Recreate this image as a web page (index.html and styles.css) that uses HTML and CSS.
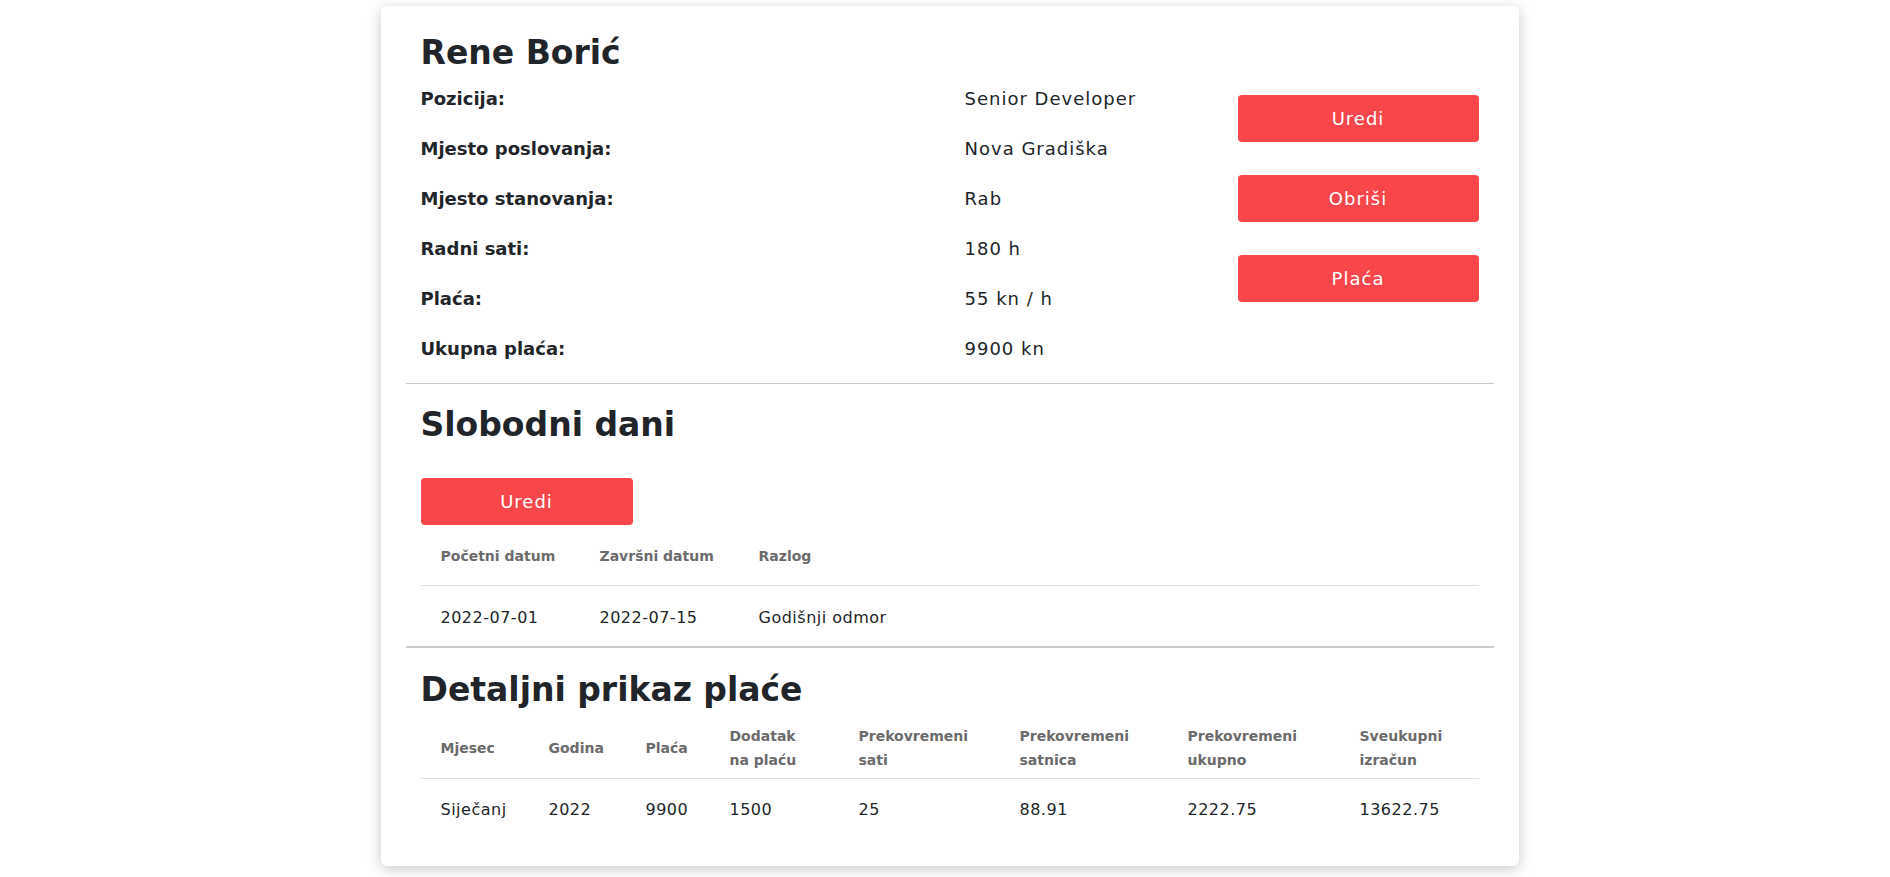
FILE: index.html
```html
<!DOCTYPE html>
<html lang="hr">
<head>
<meta charset="utf-8">
<title>Rene Borić</title>
<link rel="stylesheet" href="styles.css">
</head>
<body>
<div class="page">
  <main class="card">
    <section class="section">
      <h2 class="title">Rene Borić</h2>
      <div class="profile">
        <dl class="info">
          <dt>Pozicija:</dt><dd>Senior Developer</dd>
          <dt>Mjesto poslovanja:</dt><dd>Nova Gradiška</dd>
          <dt>Mjesto stanovanja:</dt><dd>Rab</dd>
          <dt>Radni sati:</dt><dd>180 h</dd>
          <dt>Plaća:</dt><dd>55 kn / h</dd>
          <dt>Ukupna plaća:</dt><dd>9900 kn</dd>
        </dl>
        <div class="actions">
          <button class="btn">Uredi</button>
          <button class="btn">Obriši</button>
          <button class="btn">Plaća</button>
        </div>
      </div>
    </section>
    <hr class="rule">
    <section class="section">
      <h2 class="title title-sub">Slobodni dani</h2>
      <button class="btn btn-wide">Uredi</button>
      <table class="tbl tbl-days">
        <thead>
          <tr><th class="c-date">Početni datum</th><th class="c-date">Završni datum</th><th>Razlog</th></tr>
        </thead>
        <tbody>
          <tr><td>2022-07-01</td><td>2022-07-15</td><td>Godišnji odmor</td></tr>
        </tbody>
      </table>
    </section>
    <hr class="rule rule-thick">
    <section class="section">
      <h2 class="title title-sub title-pay">Detaljni prikaz plaće</h2>
      <table class="tbl tbl-pay">
        <thead>
          <tr>
            <th class="c-month">Mjesec</th>
            <th class="c-year">Godina</th>
            <th class="c-pay">Plaća</th>
            <th class="c-bonus">Dodatak<br>na plaću</th>
            <th class="c-hours">Prekovremeni<br>sati</th>
            <th class="c-rate">Prekovremeni<br>satnica</th>
            <th class="c-total">Prekovremeni<br>ukupno</th>
            <th>Sveukupni<br>izračun</th>
          </tr>
        </thead>
        <tbody>
          <tr>
            <td>Siječanj</td><td>2022</td><td>9900</td><td>1500</td><td>25</td><td>88.91</td><td>2222.75</td><td>13622.75</td>
          </tr>
        </tbody>
      </table>
    </section>
  </main>
</div>
</body>
</html>
```

FILE: styles.css
```css
* { box-sizing: border-box; }

html, body {
  margin: 0;
  padding: 0;
  background: #ffffff;
}

body {
  font-family: "DejaVu Sans", "Liberation Sans", sans-serif;
  color: #212529;
}

.page {
  display: flex;
  justify-content: center;
  padding: 6px 0 12px 9px;
}

.card {
  width: 1138px;
  background: #ffffff;
  border-radius: 6px;
  box-shadow: 0 3px 14px rgba(0, 0, 0, 0.22);
  padding: 27px 25px 26px;
}

.section {
  padding: 0 15px;
}

.title {
  margin: 0;
  font-size: 33px;
  line-height: 40px;
  font-weight: 700;
  color: #212529;
}

.title-sub {
  margin-top: 21px;
}

.title-pay {
  margin-top: 22px;
}

.profile {
  display: grid;
  grid-template-columns: 1fr 241px;
}

.info {
  display: grid;
  grid-template-columns: 544px 1fr;
  margin: 0;
}

.info dt,
.info dd {
  margin: 0;
  height: 50px;
  display: flex;
  align-items: center;
  font-size: 18px;
}

.info dt {
  font-weight: 700;
}

.info dd {
  letter-spacing: 1px;
}

.actions {
  display: flex;
  flex-direction: column;
  gap: 33px;
  padding-top: 22px;
}

.btn {
  display: block;
  width: 100%;
  height: 47px;
  border: 0;
  border-radius: 4px;
  background: #f9464a;
  color: #ffffff;
  font-family: inherit;
  font-size: 18px;
  letter-spacing: 1px;
  cursor: pointer;
}

.btn-wide {
  width: 212px;
  height: 47px;
  margin-top: 33px;
  margin-bottom: 3px;
}

.rule {
  margin: 10px 0 0;
  border: 0;
  border-top: 1px solid #cacaca;
}

.rule-thick {
  margin-top: 0;
  border-top: 2px solid #cccccc;
}

.tbl {
  width: 100%;
  border-collapse: collapse;
  table-layout: fixed;
}

.tbl th {
  text-align: left;
  font-size: 14px;
  line-height: 24px;
  font-weight: 700;
  color: #6b6b6b;
  padding: 16px 20px 17px;
  border-bottom: 1px solid #dee2e6;
  vertical-align: middle;
}

.tbl td {
  font-size: 16px;
  line-height: 24px;
  letter-spacing: 0.5px;
  padding: 20px 20px 16px;
  color: #212529;
}

.tbl-days .c-date { width: 159px; }

.tbl-pay {
  margin-top: 8px;
}

.tbl-pay th {
  padding: 6px 0 6px 20px;
}

.tbl-pay td {
  padding: 19px 0 18px 20px;
}

.c-month { width: 108px; }
.c-year { width: 97px; }
.c-pay { width: 84px; }
.c-bonus { width: 129px; }
.c-hours { width: 161px; }
.c-rate { width: 168px; }
.c-total { width: 172px; }
```
